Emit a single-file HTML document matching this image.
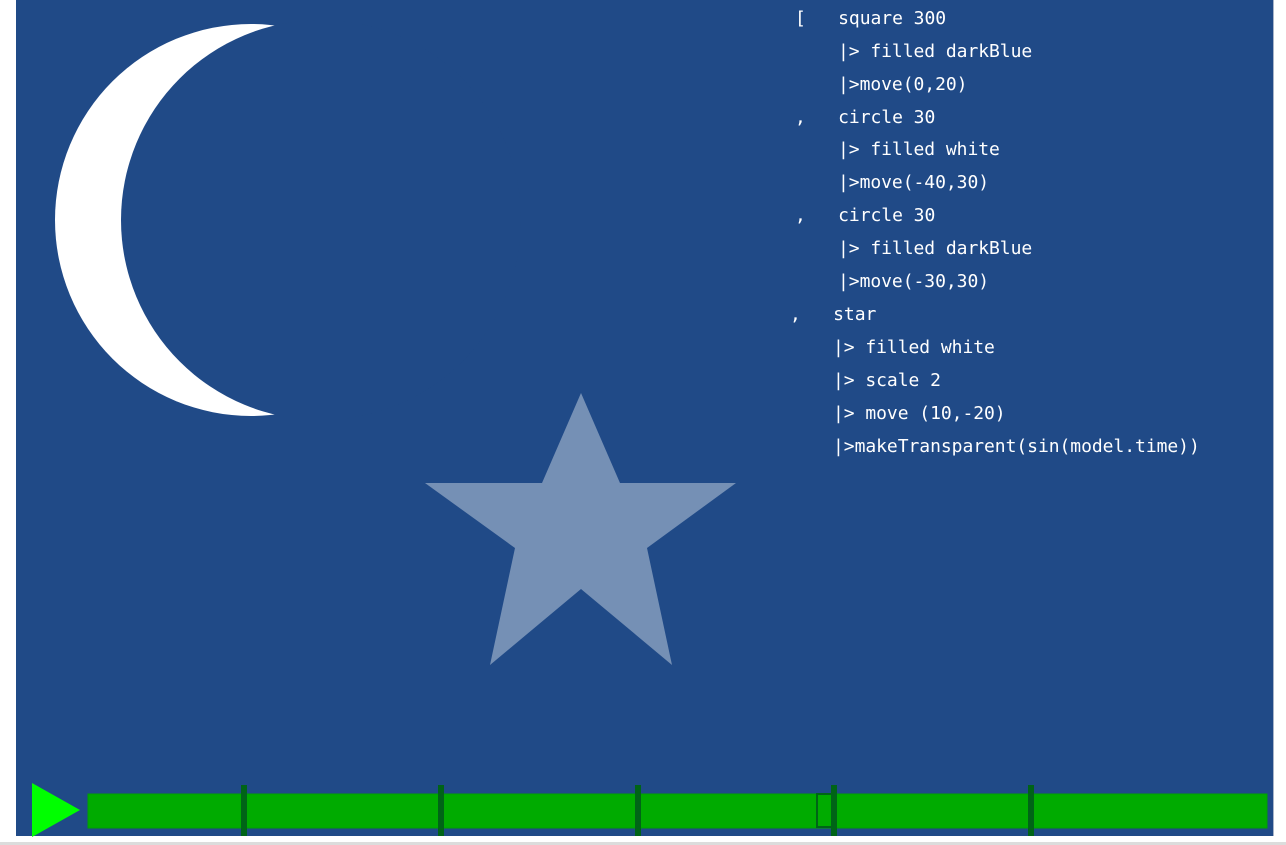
<!DOCTYPE html>
<html><head><style>
html,body{margin:0;padding:0;background:#fff;width:1286px;height:845px;overflow:hidden}
.t{position:absolute;font-family:"DejaVu Sans Mono","Liberation Mono",monospace;font-size:18px;color:#fff;white-space:pre;line-height:20px;letter-spacing:-0.05px}
</style></head><body>
<svg width="1286" height="845" style="position:absolute;left:0;top:0">
<rect x="0" y="842" width="1286" height="3" fill="#dcdcdc"/>
<rect x="16" y="0" width="1257" height="836" fill="#204a87"/>
<rect x="1273" y="0" width="1" height="836" fill="#a8b4c8"/>
<circle cx="251" cy="220" r="196" fill="#fff"/>
<circle cx="321" cy="220" r="200" fill="#204a87"/>
<polygon points="581,393 620,483 736,483 647,548 672,665 581,589 490,665 515,548 425,483 542,483" fill="#7590b5"/>
<polygon points="32,783 80,810 32,837" fill="#00ff00"/>
<rect x="88" y="794" width="1179" height="34" fill="#00ab00" stroke="#00a000" stroke-width="1"/>
<g fill="#006417">
<rect x="241" y="785" width="6" height="51"/>
<rect x="438" y="785" width="6" height="51"/>
<rect x="635" y="785" width="6" height="51"/>
<rect x="831" y="785" width="6" height="51"/>
<rect x="1028" y="785" width="6" height="51"/>
</g>
<rect x="817" y="794" width="15" height="33" fill="none" stroke="#006417" stroke-width="2"/>
</svg>
<div class="t" style="left:795px;top:9px">[   square 300</div>
<div class="t" style="left:838px;top:42px">|&gt; filled darkBlue</div>
<div class="t" style="left:838px;top:75px">|&gt;move(0,20)</div>
<div class="t" style="left:795px;top:108px">,   circle 30</div>
<div class="t" style="left:838px;top:140px">|&gt; filled white</div>
<div class="t" style="left:838px;top:173px">|&gt;move(-40,30)</div>
<div class="t" style="left:795px;top:206px">,   circle 30</div>
<div class="t" style="left:838px;top:239px">|&gt; filled darkBlue</div>
<div class="t" style="left:838px;top:272px">|&gt;move(-30,30)</div>
<div class="t" style="left:790px;top:305px">,   star</div>
<div class="t" style="left:833px;top:338px">|&gt; filled white</div>
<div class="t" style="left:833px;top:371px">|&gt; scale 2</div>
<div class="t" style="left:833px;top:404px">|&gt; move (10,-20)</div>
<div class="t" style="left:833px;top:437px">|&gt;makeTransparent(sin(model.time))</div>
</body></html>
